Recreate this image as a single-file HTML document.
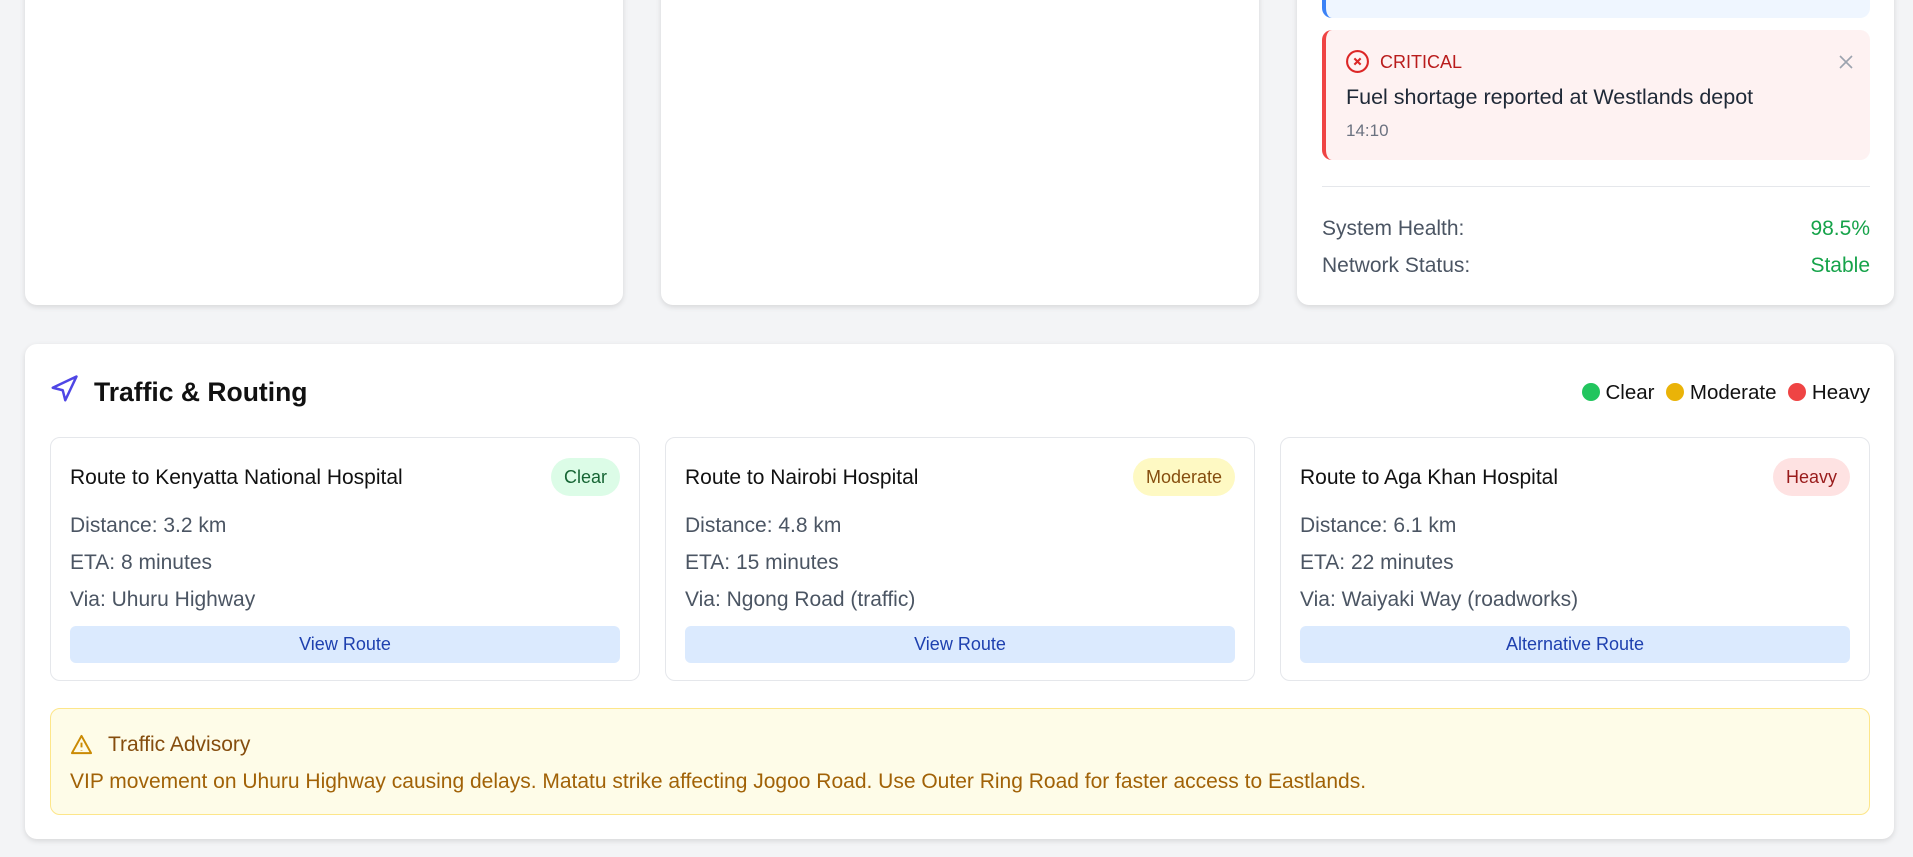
<!DOCTYPE html>
<html><head><style>
*{box-sizing:border-box;margin:0;padding:0}
body{width:1913px;height:857px;background:#f3f4f6;font-family:"Liberation Sans",sans-serif;position:relative;overflow:hidden;color:#374151}
.card{position:absolute;background:#fff;border-radius:12px;box-shadow:0 2px 6px rgba(0,0,0,.12)}
.abs{position:absolute}
.rc{position:absolute;top:437px;width:590px;height:244px;border:1px solid #e5e7eb;border-radius:10px;background:#fff}
.rc .t{position:absolute;left:19px;top:28px;font-size:21px;color:#111}
.rc .b{position:absolute;right:19px;top:20px;height:38px;border-radius:19px;font-size:18px;line-height:38px;padding:0 13px}
.rc .l{position:absolute;left:19px;font-size:21px;color:#4b5563}
.rc .btn{position:absolute;left:19px;right:19px;top:188px;height:37px;background:#dbeafe;border-radius:6px;color:#1e40af;font-size:18px;text-align:center;line-height:37px}
.dot{display:inline-block;width:18px;height:18px;border-radius:50%;vertical-align:-2px;margin-right:6px}
</style></head><body>
<div class="card" style="left:25px;top:-20px;width:598px;height:325px"></div>
<div class="card" style="left:661px;top:-20px;width:598px;height:325px"></div>
<div class="card" style="left:1297px;top:-20px;width:597px;height:325px">
 <div class="abs" style="left:25px;top:0;width:548px;height:38px;background:#eff6ff;border-left:4px solid #3b82f6;border-radius:10px"></div>
 <div class="abs" style="left:25px;top:50px;width:548px;height:130px;background:#fef2f2;border-left:4px solid #ef4444;border-radius:10px">
  <svg class="abs" style="left:19px;top:19px" width="25" height="25" viewBox="0 0 24 24" fill="none" stroke="#dc2626" stroke-width="2"><circle cx="12" cy="12" r="10"/><path d="M15 9l-6 6M9 9l6 6"/></svg>
  <div class="abs" style="left:54px;top:22px;font-size:18px;color:#b91c1c">CRITICAL</div>
  <svg class="abs" style="left:512px;top:24px" width="16" height="16" viewBox="0 0 16 16" stroke="#9ca3af" stroke-width="1.6"><path d="M2 2l12 12M14 2L2 14"/></svg>
  <div class="abs" style="left:20px;top:55px;font-size:21.5px;color:#1f2937">Fuel shortage reported at Westlands depot</div>
  <div class="abs" style="left:20px;top:91px;font-size:17px;color:#6b7280">14:10</div>
 </div>
 <div class="abs" style="left:25px;top:206px;width:548px;border-top:1px solid #e5e7eb"></div>
 <div class="abs" style="left:25px;top:237px;font-size:21px;color:#4b5563">System Health:</div>
 <div class="abs" style="right:24px;top:237px;font-size:21px;color:#16a34a">98.5%</div>
 <div class="abs" style="left:25px;top:274px;font-size:21px;color:#4b5563">Network Status:</div>
 <div class="abs" style="right:24px;top:274px;font-size:21px;color:#16a34a">Stable</div>
</div>
<div class="card" style="left:25px;top:344px;width:1869px;height:495px">
 <svg class="abs" style="left:24px;top:30px" width="30" height="30" viewBox="0 0 24 24" fill="none" stroke="#4f46e5" stroke-width="2" stroke-linejoin="round"><path d="M3 11l19-9-9 19-2-8-8-2z"/></svg>
 <div class="abs" style="left:69px;top:33px;font-size:26.5px;font-weight:bold;color:#111">Traffic &amp; Routing</div>
 <div class="abs" style="right:24px;top:37px;font-size:20.5px;color:#111"><span class="dot" style="background:#22c55e"></span>Clear &nbsp;<span class="dot" style="background:#eab308"></span>Moderate &nbsp;<span class="dot" style="background:#ef4444"></span>Heavy</div>
</div>
<div class="rc" style="left:50px"><div class="t">Route to Kenyatta National Hospital</div><div class="b" style="background:#dcfce7;color:#166534">Clear</div>
<div class="l" style="top:76px">Distance: 3.2 km</div><div class="l" style="top:113px">ETA: 8 minutes</div><div class="l" style="top:150px">Via: Uhuru Highway</div><div class="btn">View Route</div></div>
<div class="rc" style="left:665px"><div class="t">Route to Nairobi Hospital</div><div class="b" style="background:#fef9c3;color:#854d0e">Moderate</div>
<div class="l" style="top:76px">Distance: 4.8 km</div><div class="l" style="top:113px">ETA: 15 minutes</div><div class="l" style="top:150px">Via: Ngong Road (traffic)</div><div class="btn">View Route</div></div>
<div class="rc" style="left:1280px"><div class="t">Route to Aga Khan Hospital</div><div class="b" style="background:#fee2e2;color:#991b1b">Heavy</div>
<div class="l" style="top:76px">Distance: 6.1 km</div><div class="l" style="top:113px">ETA: 22 minutes</div><div class="l" style="top:150px">Via: Waiyaki Way (roadworks)</div><div class="btn">Alternative Route</div></div>
<div class="abs" style="left:50px;top:708px;width:1820px;height:107px;background:#fefce8;border:1px solid #fde68a;border-radius:10px">
 <svg class="abs" style="left:19px;top:24px" width="23" height="23" viewBox="0 0 24 24" fill="none" stroke="#ca8a04" stroke-width="2" stroke-linejoin="round"><path d="M12 3L2 21h20z"/><path d="M12 10v5M12 18v.5"/></svg>
 <div class="abs" style="left:57px;top:24px;font-size:21px;color:#854d0e">Traffic Advisory</div>
 <div class="abs" style="left:19px;top:61px;font-size:21px;color:#a16207">VIP movement on Uhuru Highway causing delays. Matatu strike affecting Jogoo Road. Use Outer Ring Road for faster access to Eastlands.</div>
</div>
</body></html>
